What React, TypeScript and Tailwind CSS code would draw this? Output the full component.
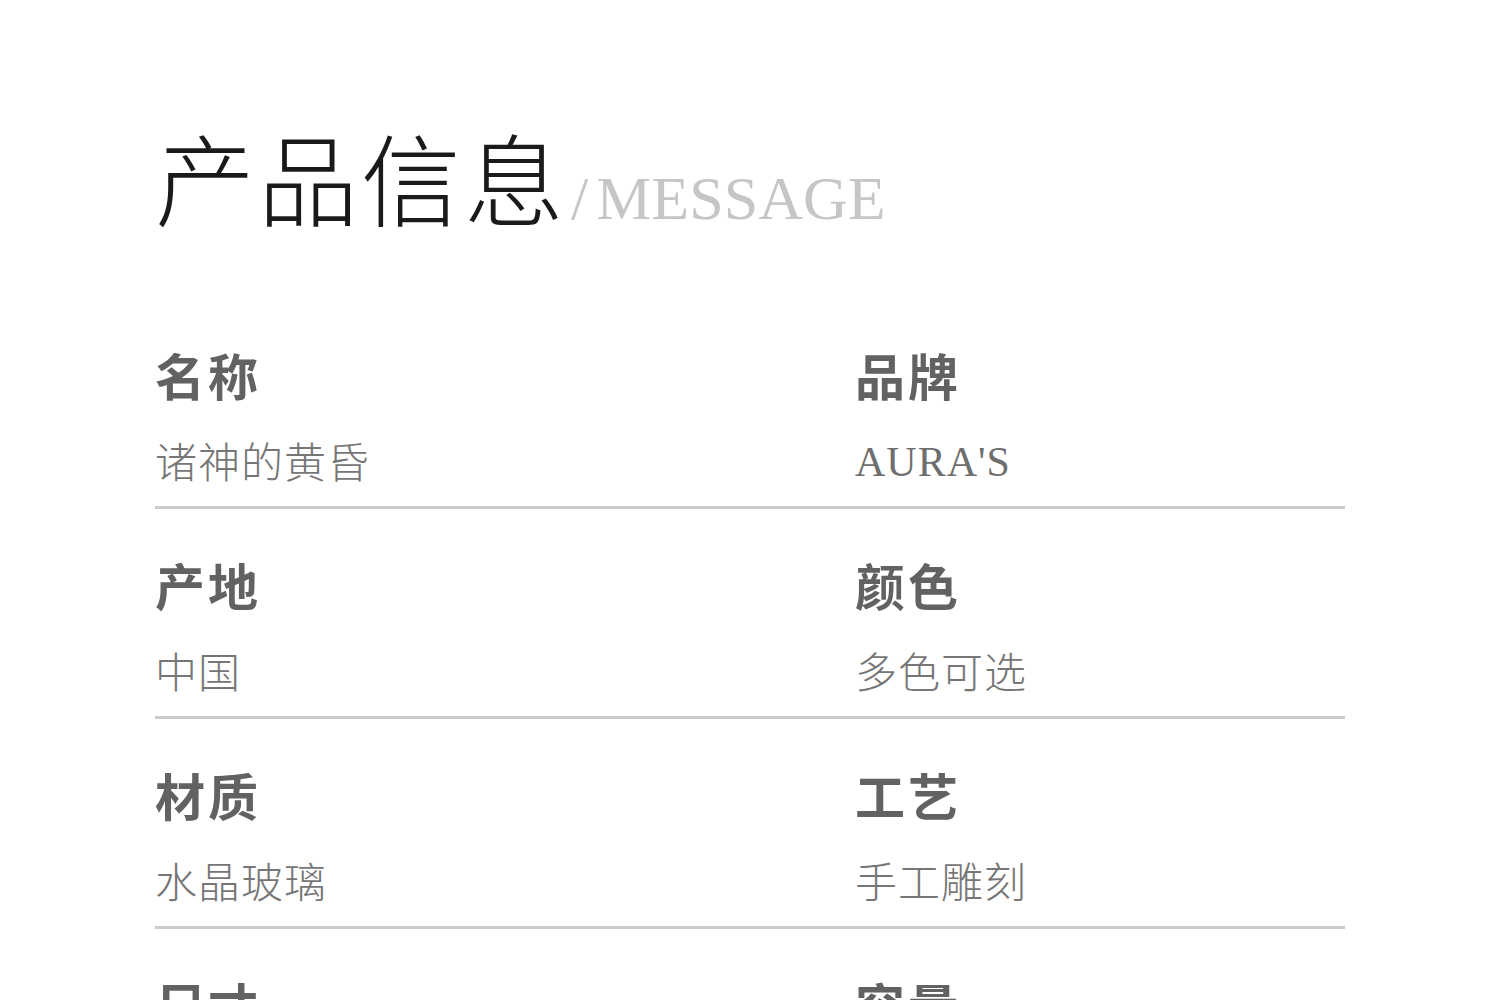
import React from "react";

const rows: [string, string, string, string][] = [
  ["名称", "诸神的黄昏", "品牌", "AURA'S"],
  ["产地", "中国", "颜色", "多色可选"],
  ["材质", "水晶玻璃", "工艺", "手工雕刻"],
  ["尺寸", "", "容量", ""],
];

const cjk = { fontFamily: '"Noto Sans CJK SC", "Noto Sans", sans-serif' };
const serif = { fontFamily: '"Liberation Serif", "Noto Sans CJK SC", serif' };

function Cell({ label, value }: { label: string; value: string }) {
  const latin = /^[A-Za-z' ]+$/.test(value);
  return (
    <div className="flex flex-col">
      <div className="text-[50px] leading-[50px] font-bold tracking-[3px] text-[#626262]" style={cjk}>
        {label}
      </div>
      <div
        className={
          latin
            ? "mt-[40px] h-[42px] text-[42px] leading-[46px] tracking-[1px] text-[#6e6e6e]"
            : "mt-[40px] h-[42px] text-[42px] leading-[42px] tracking-[1px] text-[#767676] font-light"
        }
        style={latin ? serif : cjk}
      >
        {value}
      </div>
    </div>
  );
}

export default function App() {
  return (
    <div className="w-[1500px] h-[1000px] overflow-hidden bg-white px-[155px] pt-[126px]">
      <div className="flex items-baseline h-[105px]">
        <span className="text-[100px] leading-none tracking-[3px] font-light text-[#1a1a1a]" style={cjk}>
          产品信息
        </span>
        <span className="ml-[4px] text-[62px] leading-none text-[#c6c6c6]" style={serif}>
          /
        </span>
        <span className="ml-[8px] text-[62px] leading-none text-[#c6c6c6]" style={serif}>
          MESSAGE
        </span>
      </div>
      <div className="mt-[68px]">
        {rows.map((r, i) => (
          <div key={i} className="pt-[50px]">
            <div className="grid grid-cols-[700px_1fr]">
              <Cell label={r[0]} value={r[1]} />
              <Cell label={r[2]} value={r[3]} />
            </div>
            <div className="mt-[25px] h-[3px] bg-[#cccccc]" />
          </div>
        ))}
      </div>
    </div>
  );
}
